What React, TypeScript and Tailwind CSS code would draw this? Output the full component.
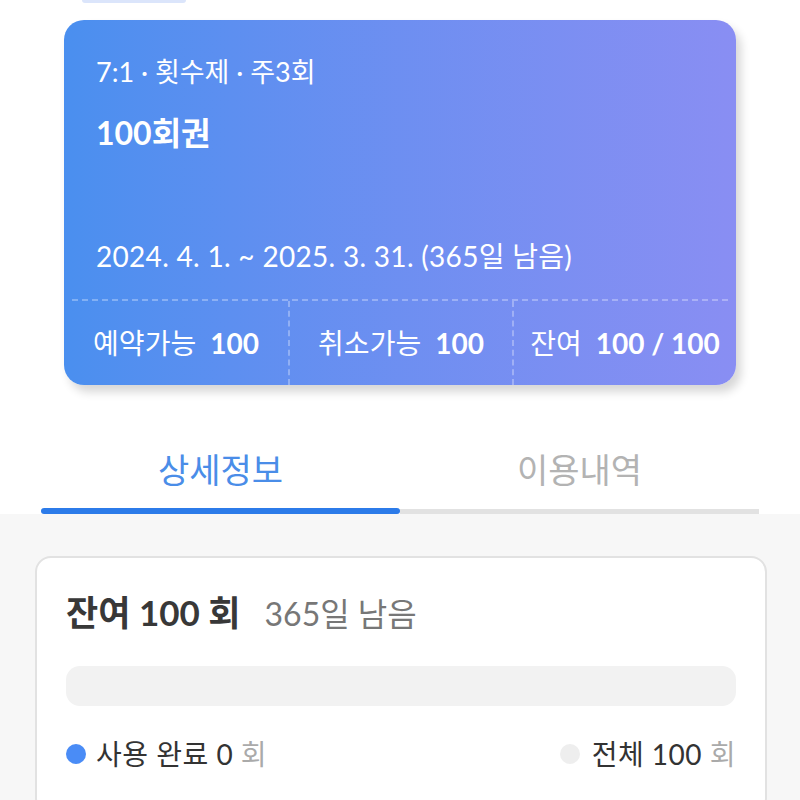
export default function App() {
  const font = { fontFamily: "Lato, 'Noto Sans CJK KR', sans-serif" };
  return (
    <div className="w-[800px] h-[800px] overflow-hidden bg-white" style={font}>
      <div className="ml-[82px] h-[3px] w-[104px] rounded-b-full bg-[#dbe5fb]" />

      {/* pass card */}
      <div className="mx-[64px] mt-[17px] h-[365px] rounded-[20px] bg-gradient-to-r from-[#4a8fef] to-[#898ef3] text-white shadow-[5px_7px_10px_rgba(0,0,0,0.16)] flex flex-col">
        <div className="px-[32px] pt-[35px] text-[27px] leading-[34px]">7:1 · 횟수제 · 주3회</div>
        <div className="px-[32px] mt-[24px] text-[32px] leading-[40px] font-bold">100회권</div>
        <div className="px-[32px] mt-[85px] text-[28px] leading-[36px] tracking-[0.3px]">2024. 4. 1. ~ 2025. 3. 31. (365일 남음)</div>
        <div className="mx-[8px] mt-[25px] border-t-2 border-dashed border-white/30" />
        <div className="grid grid-cols-3 flex-1 text-[28px]">
          <div className="flex items-center justify-center gap-[14px]">
            <span>예약가능</span>
            <span className="font-bold">100</span>
          </div>
          <div className="flex items-center justify-center gap-[14px] border-l-2 border-dashed border-white/30">
            <span>취소가능</span>
            <span className="font-bold">100</span>
          </div>
          <div className="flex items-center justify-center gap-[14px] border-l-2 border-dashed border-white/30">
            <span>잔여</span>
            <span className="font-bold">100 / 100</span>
          </div>
        </div>
      </div>

      {/* tabs */}
      <div className="mx-[41px] mt-[40px] grid grid-cols-2">
        <div className="flex flex-col">
          <div className="h-[83px] pt-[6px] flex items-center justify-center text-[34px] text-[#4a8de8]">상세정보</div>
          <div className="h-[6px] rounded-full bg-[#2c7be9]" />
        </div>
        <div className="flex flex-col">
          <div className="h-[83px] pt-[6px] flex items-center justify-center text-[34px] text-[#b3b3b3]">이용내역</div>
          <div className="h-[5px] mt-[1px] bg-[#e2e2e2]" />
        </div>
      </div>

      {/* detail */}
      <div className="bg-[#f7f7f7] pt-[42px] pl-[35px] pr-[33px] h-[300px]">
        <div className="rounded-[16px] border-2 border-[#e2e2e2] bg-white px-[29px] pt-[32px] pb-[40px]">
          <div className="flex items-baseline gap-[24px] leading-[44px]">
            <div className="text-[35px] font-bold text-[#383838]">잔여 100 회</div>
            <div className="text-[32px] text-[#777]">365일 남음</div>
          </div>
          <div className="mt-[30px] h-[40px] rounded-[14px] bg-[#f2f2f2]" />
          <div className="mt-[30px] flex items-center justify-between text-[28px] leading-[36px] text-[#333]">
            <div className="flex items-center gap-[10px]">
              <span className="w-[20px] h-[20px] rounded-full bg-[#4a8cf6]" />
              <span className="tracking-[0.5px]">사용 완료 0 <span className="text-[#aaa]">회</span></span>
            </div>
            <div className="flex items-center gap-[12px]">
              <span className="w-[20px] h-[20px] rounded-full bg-[#eeeeee]" />
              <span className="tracking-[0.5px]">전체 100 <span className="text-[#aaa]">회</span></span>
            </div>
          </div>
        </div>
      </div>
    </div>
  );
}
